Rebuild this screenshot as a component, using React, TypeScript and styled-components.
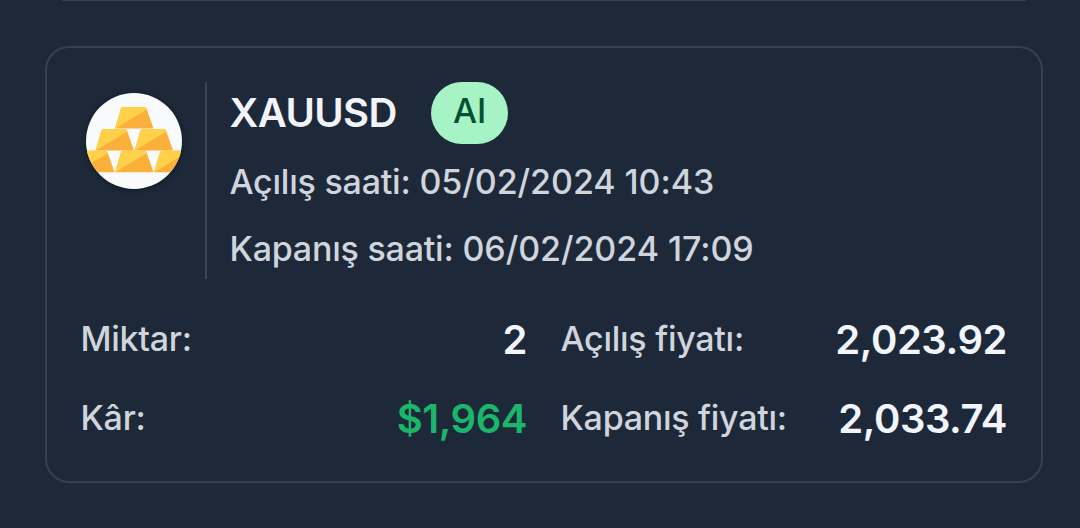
import React from "react";
import styled, { createGlobalStyle } from "styled-components";

const Global = createGlobalStyle`
  * { box-sizing: border-box; }
  body { margin: 0; background: #1d2939; font-family: Inter, sans-serif; font-weight: 500; overflow: hidden; }
`;
const Page = styled.main`
  height: 528px;
  padding: 0 37px 0 45px;
  display: flex;
  flex-direction: column;
  background: #1d2939;
`;
const PreviousCard = styled.div`
  height: 1px;
  flex: none;
  margin: 0 17px 45px;
  background: #344054;
`;
const Card = styled.section`
  height: 437px;
  padding: 34px 34px 0;
  border: 2px solid #344054;
  border-radius: 24px;
`;
const Header = styled.header`
  display: flex;
  height: 197px;
`;
const Avatar = styled.div`
  width: 96px;
  height: 96px;
  margin: 11px 23px 0 5px;
  border-radius: 50%;
  box-shadow: 0 1px 5px 0 #0f1723;
  svg { display: block; }
`;
const Details = styled.div`
  border-left: 2px solid #3a4658;
  padding-left: 23px;
`;
const TitleRow = styled.div`
  display: flex;
  height: 62px;
  gap: 34px;
`;
const Symbol = styled.h1`
  width: 167px;
  margin: 0 0 0 -0.5px;
  font-size: 40px;
  line-height: 62px;
  font-weight: 600;
  letter-spacing: -0.6px;
  color: #f2f4fa;
`;
const Badge = styled.span`
  width: 77px;
  height: 62px;
  padding-left: 1px;
  border-radius: 31px;
  background: #a6f4c5;
  color: #054f31;
  font-size: 34px;
  line-height: 58px;
  letter-spacing: -0.3px;
  text-align: center;
`;
const Time = styled.p`
  margin: 0 0 0 -0.5px;
  height: 67px;
  font-size: 34px;
  line-height: 76px;
  letter-spacing: -0.22px;
  color: #d0d5dd;
  white-space: nowrap;
`;
const Moment = styled.span`
  letter-spacing: -0.05px;
`;
const Stats = styled.div`
  display: grid;
  grid-template-columns: 446px 446px;
  column-gap: 34px;
  grid-auto-rows: 79px;
  margin-top: 21px;
`;
const Stat = styled.div`
  display: flex;
  justify-content: space-between;
  align-items: center;
  white-space: nowrap;
`;
const Label = styled.span`
  padding-bottom: 2px;
  margin-left: -0.5px;
  font-size: 34px;
  letter-spacing: -0.27px;
  color: #d0d5dd;
`;
const Value = styled.span<{ $profit?: boolean }>`
  font-size: 40px;
  font-weight: 600;
  letter-spacing: -0.45px;
  color: ${({ $profit }) => ($profit ? "#1bb56c" : "#f2f5fd")};
`;

const bars = [
  [115, 107], [95.5, 129], [134.5, 129], [76, 150.7], [115, 150.7], [154, 150.7],
];

const Gold = () => (
  <svg width="96" height="96" viewBox="86 93 96 96">
    <defs>
      <clipPath id="coin"><circle cx="134" cy="141" r="48" /></clipPath>
    </defs>
    <g clipPath="url(#coin)">
      <path d="M86 93h96v96H86z" fill="#f9fafc" />
      {bars.map(([x, y]) => (
        <g key={`${x}-${y}`} transform={`translate(${x} ${y})`}>
          <path d="M0 21.6 6 1.5Q6.5 0 8 0H29.5Q31 0 31.5 1.5L38.5 21.6Z" fill="#fbb03b" />
          <path d="M0 21.6 6 1.5Q6.5 0 8 0H29.5Q31 0 31.8 2.6Z" fill="#ffd149" />
        </g>
      ))}
    </g>
  </svg>
);

export default function App() {
  return (
    <>
      <Global />
      <Page>
        <PreviousCard />
        <Card>
          <Header>
            <Avatar><Gold /></Avatar>
            <Details>
              <TitleRow><Symbol>XAUUSD</Symbol><Badge>AI</Badge></TitleRow>
              <Time>Açılış saati: <Moment>05/02/2024 10:43</Moment></Time>
              <Time>Kapanış saati: <Moment>06/02/2024 17:09</Moment></Time>
            </Details>
          </Header>
          <Stats>
            <Stat><Label>Miktar:</Label><Value>2</Value></Stat>
            <Stat><Label>Açılış fiyatı:</Label><Value>2,023.92</Value></Stat>
            <Stat><Label>Kâr:</Label><Value $profit>$1,964</Value></Stat>
            <Stat><Label>Kapanış fiyatı:</Label><Value>2,033.74</Value></Stat>
          </Stats>
        </Card>
      </Page>
    </>
  );
}
